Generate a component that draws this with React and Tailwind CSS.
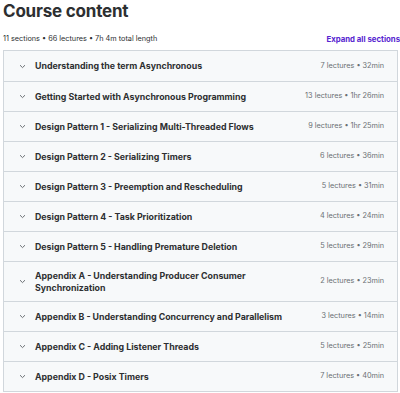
import React from "react";

const sections = [
  ["Understanding the term Asynchronous", "7 lectures • 32min"],
  ["Getting Started with Asynchronous Programming", "13 lectures • 1hr 26min"],
  ["Design Pattern 1 - Serializing Multi-Threaded Flows", "9 lectures • 1hr 25min"],
  ["Design Pattern 2 - Serializing Timers", "6 lectures • 36min"],
  ["Design Pattern 3 - Preemption and Rescheduling", "5 lectures • 31min"],
  ["Design Pattern 4 - Task Prioritization", "4 lectures • 24min"],
  ["Design Pattern 5 - Handling Premature Deletion", "5 lectures • 29min"],
  ["Appendix A - Understanding Producer Consumer Synchronization", "2 lectures • 23min"],
  ["Appendix B - Understanding Concurrency and Parallelism", "3 lectures • 14min"],
  ["Appendix C - Adding Listener Threads", "5 lectures • 25min"],
  ["Appendix D - Posix Timers", "7 lectures • 40min"],
];

function Chevron() {
  return (
    <svg width="7" height="5" viewBox="0 0 7 5" className="shrink-0">
      <path d="M1 1.2 L3.5 3.6 L6 1.2" fill="none" stroke="#6a6f73" strokeWidth="1" />
    </svg>
  );
}

export default function App() {
  return (
    <div
      className="w-[400px] h-[393px] overflow-hidden bg-white text-[#2d2f31]"
      style={{ fontFamily: "Inter, 'Noto Sans', sans-serif" }}
    >
      <div className="pl-[3px]">
        <h2 className="text-[17px] font-bold leading-[20px] pt-[1px] tracking-[-0.2px]">Course content</h2>
        <div className="flex items-end justify-between mt-[12px] h-[12px]">
          <span className="text-[7.3px] leading-[12px] text-[#2d2f31]">11 sections • 66 lectures • 7h 4m total length</span>
          <span className="text-[7.8px] leading-[12px] font-bold text-[#5624d0] whitespace-nowrap">Expand all sections</span>
        </div>
        <div className="mt-[5px] mr-[2px] border border-[#d1d7dc]">
          {sections.map(([t, m], i) => (
            <div
              key={i}
              className={`flex items-center bg-[#f7f9fa] pl-[15px] pr-[13px] ${i > 0 ? "border-t border-[#d1d7dc]" : ""} ${t.length > 56 ? "h-[40px]" : "h-[30px]"}`}
            >
              <Chevron />
              <div className="ml-[9px] flex-1 text-[8.8px] leading-[12px] font-bold pr-4">
                {t.length > 56 ? (
                  <>Appendix A - Understanding Producer Consumer<br />Synchronization</>
                ) : t}
              </div>
              <div className="text-[7.3px] text-[#6a6f73] whitespace-nowrap">{m}</div>
            </div>
          ))}
        </div>
      </div>
    </div>
  );
}
